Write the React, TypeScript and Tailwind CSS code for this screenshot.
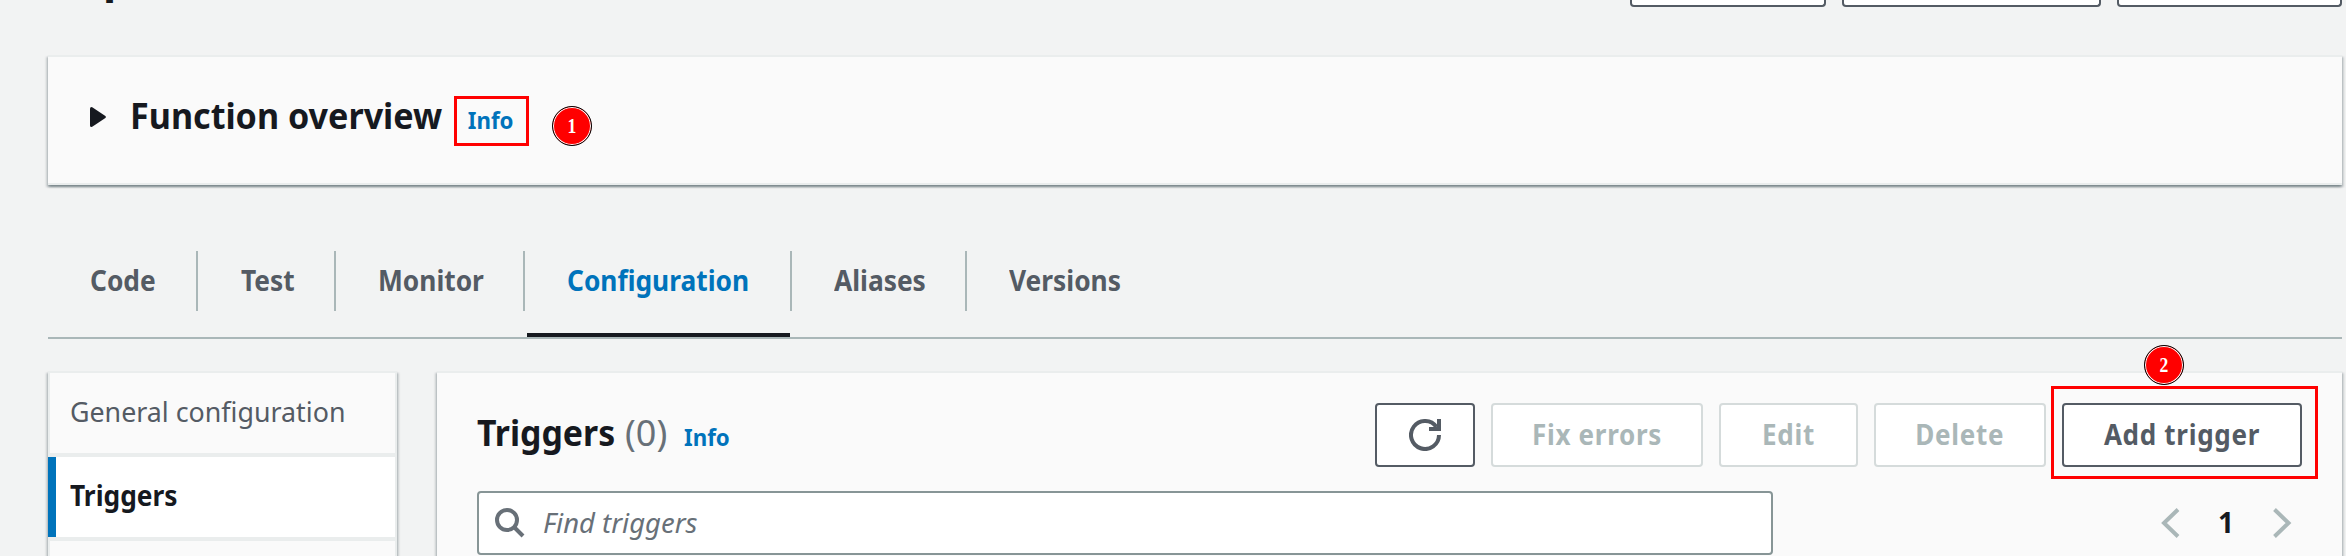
import type { ReactNode } from 'react';

const PANEL =
  'bg-[#fafafa] border-t-2 border-[#eaeded] shadow-[0_2px_2px_0_rgba(0,28,36,0.3),2px_2px_2px_0_rgba(0,28,36,0.15),-2px_2px_2px_0_rgba(0,28,36,0.15)]';

function Marker({ n, className }: { n: string; className: string }) {
  return (
    <span
      className={`absolute flex size-10 items-center justify-center rounded-full border border-[#000] bg-[#ff0000] font-['Liberation_Serif',serif] text-[20px] font-bold leading-none text-white shadow-[inset_0_0_0_1px_#fff] ${className}`}
    >
      <span className="inline-block scale-x-[0.88]">{n}</span>
    </span>
  );
}

function Tab({ label, className, active = false }: { label: string; className: string; active?: boolean }) {
  return (
    <div className={`relative flex h-[86px] shrink-0 items-start ${className}`}>
      <span
        className={`origin-left scale-x-[0.94] whitespace-nowrap pt-[10px] leading-[38px] ${active ? 'text-[#0073bb]' : 'text-[#545b64]'}`}
      >
        {label}
      </span>
      {active && <span className="absolute bottom-0 left-[2px] right-0 h-1 bg-[#16191f]" />}
    </div>
  );
}

function Divider() {
  return <span className="h-[60px] w-[2px] shrink-0 bg-[#aab7b8]" />;
}

function Button({ children, className, disabled = false }: { children: ReactNode; className: string; disabled?: boolean }) {
  return (
    <button
      disabled={disabled}
      className={`flex h-16 shrink-0 items-center justify-center whitespace-nowrap rounded-[4px] border-2 bg-white text-[28px] font-bold ${
        disabled ? 'border-[#d5dbdb] text-[#aab7b8]' : 'border-[#545b64] text-[#545b64]'
      } ${className}`}
    >
      {children}
    </button>
  );
}

function Label({ children }: { children: string }) {
  return <span className="inline-block scale-x-[0.93] pb-[3px] tracking-[0.75px]">{children}</span>;
}

export default function App() {
  return (
    <div className="flex h-[556px] w-[2346px] flex-col overflow-hidden bg-[#f2f3f3] pl-12 pr-1 font-['Noto_Sans',sans-serif] text-[#16191f]">
      <header className="flex h-[55px] shrink-0 items-start justify-between">
        <div className="h-[3px] overflow-hidden pl-[55px]">
          <span className="-mt-[42px] block text-[44px] font-bold leading-[48px]">p</span>
        </div>
        <div className="flex gap-4">
          <span className="h-[7px] w-[196px] rounded-b-[4px] border-2 border-t-0 border-[#545b64] bg-white" />
          <span className="h-[7px] w-[259px] rounded-b-[4px] border-2 border-t-0 border-[#545b64] bg-white" />
          <span className="h-[7px] w-[225px] rounded-b-[4px] border-2 border-t-0 border-[#545b64] bg-white" />
        </div>
      </header>

      <section className={`flex h-[130px] shrink-0 items-start border-b-2 pl-[42px] ${PANEL}`}>
        <svg className="mt-[50px] h-5 w-4 shrink-0" viewBox="0 0 16 20" fill="#16191f">
          <path d="M0 1.5Q0 0 1.6 0L2.6.4 15.4 9Q16.4 10 15.4 11L2.6 19.6 1.6 20Q0 20 0 18.5Z" />
        </svg>
        <h2 className="ml-[24px] mt-[34px] w-[324px] whitespace-nowrap text-[36px] font-bold leading-[50px]">
          <span className="inline-block origin-left scale-x-[0.947]">Function overview</span>
        </h2>
        <div className="relative mt-[39px] flex h-[50px] w-[75px] items-center justify-center border-[3px] border-[#ff0000]">
          <a className="inline-block scale-x-[0.93] pb-[2px] pr-[2px] text-[24px] font-bold leading-[32px] text-[#0073bb]">Info</a>
          <Marker n="1" className="left-[95px] top-[7px]" />
        </div>
      </section>

      <nav className="mt-[66px] flex h-[88px] shrink-0 border-b-2 border-[#aab7b8] text-[28px] font-bold">
        <Tab label="Code" className="w-[148px] pl-[42px]" />
        <Divider />
        <Tab label="Test" className="w-[136px] pl-[43px]" />
        <Divider />
        <Tab label="Monitor" className="w-[187px] pl-[42px]" />
        <Divider />
        <Tab label="Configuration" className="w-[265px] pl-[42px]" active />
        <Divider />
        <Tab label="Aliases" className="w-[173px] pl-[42px]" />
        <Divider />
        <Tab label="Versions" className="w-[200px] pl-[42px]" />
      </nav>

      <main className="mt-8 flex h-[240px] shrink-0 gap-10">
        <aside className={`w-[349px] shrink-0 text-[28px] ${PANEL}`}>
          <div className="flex h-[84px] items-start whitespace-nowrap border-x-2 border-b-4 border-[#eaeded] pl-[20px] pt-[19px] leading-[38px] text-[#545b64]">
            <span className="origin-left scale-x-[0.957]">General configuration</span>
          </div>
          <div className="flex h-[84px] items-start border-b-4 border-r-2 border-[#eaeded] bg-white font-bold leading-[38px]">
            <span className="h-full w-2 bg-[#0073bb]" />
            <span className="ml-[14px] origin-left scale-x-[0.94] pt-[19px]">Triggers</span>
          </div>
          <div className="h-20 border-x-2 border-[#eaeded]" />
        </aside>

        <section className={`flex-1 pl-10 pr-10 pt-[30px] ${PANEL}`}>
          <div className="flex h-16 items-center justify-between">
            <div className="flex items-baseline whitespace-nowrap pb-1">
              <h2 className="w-[148px] text-[36px] font-bold leading-[50px]">
                <span className="inline-block origin-left scale-x-[0.94]">Triggers</span>
              </h2>
              <span className="w-[59px] text-[36px] text-[#687078]">(0)</span>
              <a className="inline-block origin-left scale-x-[0.93] text-[24px] font-bold text-[#0073bb]">Info</a>
            </div>
            <div className="flex gap-4">
              <Button className="w-[100px]">
                <svg className="size-8" viewBox="0 0 32 32" fill="none" stroke="currentColor" strokeWidth="4">
                  <path d="M30 16A14 14 0 1 1 27.5 8" />
                  <path d="M20 10H30V0" />
                </svg>
              </Button>
              <Button className="w-[212px]" disabled><Label>Fix errors</Label></Button>
              <Button className="w-[139px]" disabled><Label>Edit</Label></Button>
              <Button className="w-[172px]" disabled><Label>Delete</Label></Button>
              <div className="relative">
                <Button className="w-[240px]"><Label>Add trigger</Label></Button>
                <span className="absolute -left-[11px] -top-[17px] h-[93px] w-[267px] border-[3px] border-[#ff0000]" />
                <Marker n="2" className="-top-[58px] left-[82px]" />
              </div>
            </div>
          </div>
          <div className="mt-6 flex items-center justify-between">
            <div className="flex h-16 w-[1296px] items-center rounded-[4px] border-2 border-[#879596] bg-white pl-4">
              <svg className="h-[30px] w-[30px]" viewBox="0 0 30 30" fill="none" stroke="#687078" strokeWidth="4">
                <circle cx="12" cy="12" r="10" />
                <path d="M19 19L28 28" />
              </svg>
              <span className="ml-[18px] origin-left scale-x-[0.98] whitespace-nowrap pb-[2px] text-[28px] italic text-[#687078]">
                Find triggers
              </span>
            </div>
            <div className="flex items-center pr-[10px]">
              <svg className="h-[30px] w-[19px]" viewBox="0 0 19 30" fill="none" stroke="#aab7b8" strokeWidth="4">
                <path d="M17 1.5L3 15 17 28.5" />
              </svg>
              <span className="w-[93px] pb-[3px] pr-px text-center text-[28px] font-bold leading-[38px]">1</span>
              <svg className="h-[30px] w-[19px]" viewBox="0 0 19 30" fill="none" stroke="#aab7b8" strokeWidth="4">
                <path d="M1.5 1.5L15.5 15 1.5 28.5" />
              </svg>
            </div>
          </div>
        </section>
      </main>
    </div>
  );
}
